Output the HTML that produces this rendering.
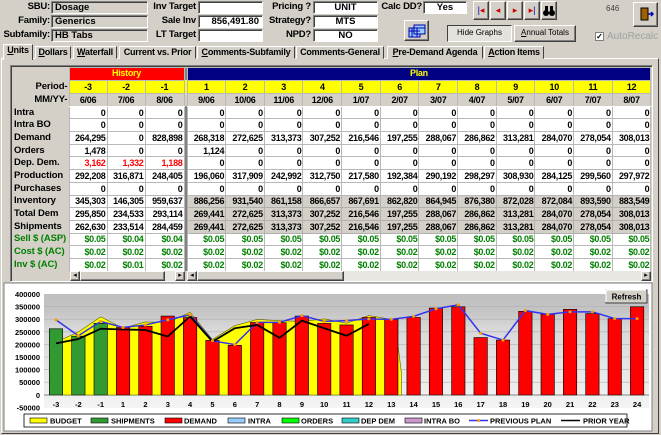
<!DOCTYPE html>
<html><head><meta charset="utf-8"><style>
*{box-sizing:border-box;margin:0;padding:0}
body{width:661px;height:435px;background:#d4d0c8;font-family:"Liberation Sans",sans-serif;font-size:10px;font-weight:bold;position:relative;overflow:hidden;color:#000}
.a{position:absolute}
.lbl{position:absolute;text-align:right;font-size:9.5px;line-height:12px;white-space:nowrap;letter-spacing:-0.2px}
.fld{position:absolute;height:13px;background:#fff;border-top:1px solid #808080;border-left:1px solid #808080;border-bottom:1px solid #fff;border-right:1px solid #fff;box-shadow:inset 1px 1px 0 #404040;font-size:9.5px;line-height:11px;padding:0 3px;white-space:nowrap;overflow:hidden}
.g{background:#d4d0c8}
.btn{position:absolute;background:#d4d0c8;border:1px solid;border-color:#fff #404040 #404040 #fff;box-shadow:inset -1px -1px 0 #808080;text-align:center;font-weight:normal;font-size:8px;white-space:nowrap;overflow:hidden}
.tab{position:absolute;top:46px;height:13px;border:1px solid;border-color:#fff #404040 transparent #fff;font-size:9px;line-height:11px;padding:0 2px;background:#d4d0c8;white-space:nowrap;overflow:hidden;letter-spacing:-0.2px;text-align:center}
table{position:absolute;left:12px;top:67px;width:639px;border-collapse:collapse;table-layout:fixed}
td{border:1px solid #b8b8b8;height:12.7px;font-size:9px;line-height:10px;padding:0 1px;text-align:right;white-space:nowrap;overflow:hidden;background:#fff;letter-spacing:-0.3px}
td.l{text-align:left;background:#d4d0c8;border:none;padding-left:2px;font-size:9.5px;letter-spacing:-0.1px}
td.s{background:#808080;border:none;border-left:1px solid #fff;padding:0}
td.h{background:#d4d0c8;border:none}
tr.y td{background:#ffff00;text-align:center;height:13px}
tr.m td{background:#d4d0c8;text-align:center;height:13px;border-color:#fff #b8b8b8}
tr.gr td.p{background:#d4d0c8;border-color:#b0b0b0}
tr.gn td{color:#008000}
tr.gn td.l{color:#008000}
.r{color:#f00}
</style></head><body>
<div class="lbl" style="left:0;width:50px;top:1px">SBU:</div>
<div class="fld g" style="left:51px;top:1px;width:97px">Dosage</div>
<div class="lbl" style="left:0;width:50px;top:15px">Family:</div>
<div class="fld g" style="left:51px;top:15px;width:97px">Generics</div>
<div class="lbl" style="left:0;width:50px;top:29px">Subfamily:</div>
<div class="fld g" style="left:51px;top:29px;width:97px">HB Tabs</div>
<div class="lbl" style="left:148px;width:48px;top:1px">Inv Target</div>
<div class="fld" style="left:198px;top:1px;width:65px"></div>
<div class="lbl" style="left:148px;width:48px;top:15px">Sale Inv</div>
<div class="fld" style="left:198px;top:15px;width:65px;text-align:right">856,491.80</div>
<div class="lbl" style="left:148px;width:48px;top:29px">LT Target</div>
<div class="fld" style="left:198px;top:29px;width:65px"></div>
<div class="lbl" style="left:263px;width:48px;top:1px">Pricing ?</div>
<div class="fld" style="left:313px;top:1px;width:65px;text-align:center">UNIT</div>
<div class="lbl" style="left:263px;width:48px;top:15px">Strategy?</div>
<div class="fld" style="left:313px;top:15px;width:65px;text-align:center">MTS</div>
<div class="lbl" style="left:263px;width:48px;top:29px">NPD?</div>
<div class="fld" style="left:313px;top:29px;width:65px;text-align:center">NO</div>
<div class="lbl" style="left:378px;width:44px;top:1px">Calc DD?</div>
<div class="fld" style="left:423px;top:1px;width:44px;text-align:center">Yes</div>
<div class="btn" style="left:473px;top:1px;width:16px;height:19px;font-size:9px;line-height:16px;color:#c00"><span style="color:#00a">|</span>◂</div>
<div class="btn" style="left:490px;top:1px;width:16px;height:19px;font-size:9px;line-height:16px;color:#c00">◂</div>
<div class="btn" style="left:507px;top:1px;width:16px;height:19px;font-size:9px;line-height:16px;color:#c00">▸</div>
<div class="btn" style="left:524px;top:1px;width:16px;height:19px;font-size:9px;line-height:16px;color:#c00">▸<span style="color:#00a">|</span></div>
<div class="btn" style="left:541px;top:1px;width:16px;height:19px"><svg width="14" height="17"><circle cx="4" cy="11" r="3" fill="#000"/><circle cx="10" cy="11" r="3" fill="#000"/><rect x="3" y="4" width="3" height="6" fill="#000"/><rect x="8" y="4" width="3" height="6" fill="#000"/></svg></div>
<div class="a" style="left:606px;top:4px;font-size:8px;font-weight:normal;color:#404040">646</div>
<div class="btn" style="left:633px;top:2px;width:25px;height:25px"><svg width="23" height="23"><rect x="7" y="5" width="7" height="12" fill="#a06000" stroke="#000"/><path d="M14 11h5M17 9l2 2-2 2" stroke="#00a" fill="none" stroke-width="1.5"/></svg></div>
<div class="btn" style="left:404px;top:20px;width:25px;height:21px"><svg width="23" height="19"><rect x="4" y="7" width="11" height="9" fill="#9cf" stroke="#00a"/><rect x="9" y="4" width="11" height="9" fill="#9cf" stroke="#00a"/><path d="M9 7h11M4 10h11M7 7v9M12 7v9" stroke="#00a"/></svg></div>
<div class="btn" style="left:447px;top:25px;width:65px;height:17px;line-height:14px;background:#e4e2dc;border-color:#404040 #fff #fff #404040;box-shadow:none">Hide Graphs</div>
<div class="btn" style="left:514px;top:25px;width:62px;height:17px;line-height:14px"><u>A</u>nnual Totals</div>
<div class="a" style="left:595px;top:32px;width:9px;height:9px;border:1px solid #808080;background:#fff;font-size:8px;line-height:7px;text-align:center">✓</div>
<div class="a" style="left:607px;top:31px;font-size:10px;font-weight:normal;color:#a0a0a0">AutoRecalc</div>
<div class="a" style="left:1px;top:58px;width:658px;height:376px;border:1px solid;border-color:#fff #404040 #404040 #fff"></div>
<div class="tab" style="left:3px;top:44px;height:16px;width:30px;border-bottom:none;z-index:2"><u>U</u>nits</div>
<div class="tab" style="left:35px;width:36px"><u>D</u>ollars</div>
<div class="tab" style="left:73px;width:44px"><u>W</u>aterfall</div>
<div class="tab" style="left:119px;width:77px">Current vs. Prior</div>
<div class="tab" style="left:197px;width:98px"><u>C</u>omments-Subfamily</div>
<div class="tab" style="left:296px;width:88px">Comments-General</div>
<div class="tab" style="left:387px;width:96px"><u>P</u>re-Demand Agenda</div>
<div class="tab" style="left:484px;width:60px"><u>A</u>ction Items</div>
<div class="a" style="left:10px;top:65px;width:643px;height:217px;border:1px solid;border-color:#808080 #fff #fff #808080;box-shadow:inset 1px 1px 0 #404040"></div>
<table>
<colgroup><col style="width:57px"><col style="width:38px"><col style="width:38px"><col style="width:39px"><col style="width:3px"><col span="12" style="width:38.67px"></colgroup>
<tr><td class="h" style="height:11px"></td><td colspan="3" style="background:#f00;color:#ff0;text-align:center;height:11px;font-size:9px;line-height:9px">History</td><td class="s"></td><td colspan="12" style="background:#000080;color:#ff0;text-align:center;height:11px;font-size:9px;line-height:9px">Plan</td></tr>
<tr class="y"><td class="l" style="background:#d4d0c8;text-align:right">Period-</td><td>-3</td><td>-2</td><td>-1</td><td class="s"></td><td>1</td><td>2</td><td>3</td><td>4</td><td>5</td><td>6</td><td>7</td><td>8</td><td>9</td><td>10</td><td>11</td><td>12</td></tr>
<tr class="m"><td class="l" style="text-align:right">MM/YY-</td><td>6/06</td><td>7/06</td><td>8/06</td><td class="s"></td><td>9/06</td><td>10/06</td><td>11/06</td><td>12/06</td><td>1/07</td><td>2/07</td><td>3/07</td><td>4/07</td><td>5/07</td><td>6/07</td><td>7/07</td><td>8/07</td></tr>
<tr><td class="l">Intra</td><td>0</td><td>0</td><td>0</td><td class="s"></td><td>0</td><td>0</td><td>0</td><td>0</td><td>0</td><td>0</td><td>0</td><td>0</td><td>0</td><td>0</td><td>0</td><td>0</td></tr>
<tr><td class="l">Intra BO</td><td>0</td><td>0</td><td>0</td><td class="s"></td><td>0</td><td>0</td><td>0</td><td>0</td><td>0</td><td>0</td><td>0</td><td>0</td><td>0</td><td>0</td><td>0</td><td>0</td></tr>
<tr><td class="l">Demand</td><td>264,295</td><td>0</td><td>828,898</td><td class="s"></td><td>268,318</td><td>272,625</td><td>313,373</td><td>307,252</td><td>216,546</td><td>197,255</td><td>288,067</td><td>286,862</td><td>313,281</td><td>284,070</td><td>278,054</td><td>308,013</td></tr>
<tr><td class="l">Orders</td><td>1,478</td><td>0</td><td>0</td><td class="s"></td><td>1,124</td><td>0</td><td>0</td><td>0</td><td>0</td><td>0</td><td>0</td><td>0</td><td>0</td><td>0</td><td>0</td><td>0</td></tr>
<tr><td class="l">Dep. Dem.</td><td class="r">3,162</td><td class="r">1,332</td><td class="r">1,188</td><td class="s"></td><td>0</td><td>0</td><td>0</td><td>0</td><td>0</td><td>0</td><td>0</td><td>0</td><td>0</td><td>0</td><td>0</td><td>0</td></tr>
<tr><td class="l">Production</td><td>292,208</td><td>316,871</td><td>248,405</td><td class="s"></td><td>196,060</td><td>317,909</td><td>242,992</td><td>312,750</td><td>217,580</td><td>192,384</td><td>290,192</td><td>298,297</td><td>308,930</td><td>284,125</td><td>299,560</td><td>297,972</td></tr>
<tr><td class="l">Purchases</td><td>0</td><td>0</td><td>0</td><td class="s"></td><td>0</td><td>0</td><td>0</td><td>0</td><td>0</td><td>0</td><td>0</td><td>0</td><td>0</td><td>0</td><td>0</td><td>0</td></tr>
<tr class="gr"><td class="l">Inventory</td><td>345,303</td><td>146,305</td><td>959,637</td><td class="s"></td><td class="p">886,256</td><td class="p">931,540</td><td class="p">861,158</td><td class="p">866,657</td><td class="p">867,691</td><td class="p">862,820</td><td class="p">864,945</td><td class="p">876,380</td><td class="p">872,028</td><td class="p">872,084</td><td class="p">893,590</td><td class="p">883,549</td></tr>
<tr class="gr"><td class="l">Total Dem</td><td>295,850</td><td>234,533</td><td>293,114</td><td class="s"></td><td class="p">269,441</td><td class="p">272,625</td><td class="p">313,373</td><td class="p">307,252</td><td class="p">216,546</td><td class="p">197,255</td><td class="p">288,067</td><td class="p">286,862</td><td class="p">313,281</td><td class="p">284,070</td><td class="p">278,054</td><td class="p">308,013</td></tr>
<tr class="gr"><td class="l">Shipments</td><td>262,630</td><td>233,514</td><td>284,459</td><td class="s"></td><td class="p">269,441</td><td class="p">272,625</td><td class="p">313,373</td><td class="p">307,252</td><td class="p">216,546</td><td class="p">197,255</td><td class="p">288,067</td><td class="p">286,862</td><td class="p">313,281</td><td class="p">284,070</td><td class="p">278,054</td><td class="p">308,013</td></tr>
<tr class="gn"><td class="l">Sell $ (ASP)</td><td>$0.05</td><td>$0.04</td><td>$0.04</td><td class="s"></td><td>$0.05</td><td>$0.05</td><td>$0.05</td><td>$0.05</td><td>$0.05</td><td>$0.05</td><td>$0.05</td><td>$0.05</td><td>$0.05</td><td>$0.05</td><td>$0.05</td><td>$0.05</td></tr>
<tr class="gn"><td class="l">Cost $ (AC)</td><td>$0.02</td><td>$0.02</td><td>$0.02</td><td class="s"></td><td>$0.02</td><td>$0.02</td><td>$0.02</td><td>$0.02</td><td>$0.02</td><td>$0.02</td><td>$0.02</td><td>$0.02</td><td>$0.02</td><td>$0.02</td><td>$0.02</td><td>$0.02</td></tr>
<tr class="gn"><td class="l">Inv $ (AC)</td><td>$0.02</td><td>$0.01</td><td>$0.02</td><td class="s"></td><td>$0.02</td><td>$0.02</td><td>$0.02</td><td>$0.02</td><td>$0.02</td><td>$0.02</td><td>$0.02</td><td>$0.02</td><td>$0.02</td><td>$0.02</td><td>$0.02</td><td>$0.02</td></tr>
</table>
<div class="a" style="left:70px;top:271px;width:115px;height:10px;background:#e8e6e0"></div>
<div class="btn" style="left:70px;top:271px;width:10px;height:10px;font-size:7px;line-height:8px">◂</div>
<div class="btn" style="left:80px;top:271px;width:85px;height:10px"></div>
<div class="btn" style="left:175px;top:271px;width:10px;height:10px;font-size:7px;line-height:8px">▸</div>
<div class="a" style="left:187px;top:271px;width:464px;height:10px;background:#e8e6e0"></div>
<div class="btn" style="left:187px;top:271px;width:10px;height:10px;font-size:7px;line-height:8px">◂</div>
<div class="btn" style="left:197px;top:271px;width:147px;height:10px"></div>
<div class="btn" style="left:641px;top:271px;width:10px;height:10px;font-size:7px;line-height:8px">▸</div>
<svg class="a" style="left:0;top:0" width="661" height="435" font-family="Liberation Sans, sans-serif" font-weight="bold">
<defs><linearGradient id="bg" x1="0" y1="0" x2="0" y2="1"><stop offset="0" stop-color="#c0c0c0"/><stop offset="0.15" stop-color="#c4c4c4"/><stop offset="0.3" stop-color="#d8d8d8"/><stop offset="1" stop-color="#f4f4f4"/></linearGradient></defs>
<rect x="4" y="283" width="648" height="148" fill="#fff" stroke="#808080"/>
<rect x="44" y="294" width="605" height="114" fill="url(#bg)"/>
<g stroke="#b0b0b0" stroke-width="0.6">
<line x1="44" y1="306.6" x2="649" y2="306.6"/><line x1="44" y1="319.2" x2="649" y2="319.2"/><line x1="44" y1="331.8" x2="649" y2="331.8"/><line x1="44" y1="344.4" x2="649" y2="344.4"/><line x1="44" y1="357" x2="649" y2="357"/><line x1="44" y1="369.6" x2="649" y2="369.6"/><line x1="44" y1="382.2" x2="649" y2="382.2"/></g>
<line x1="44" y1="395" x2="649" y2="395" stroke="#606060" stroke-width="0.8"/>
<g font-size="7.5" text-anchor="end" fill="#000">
<text x="40" y="297">400000</text><text x="40" y="309.6">350000</text><text x="40" y="322.2">300000</text><text x="40" y="334.8">250000</text><text x="40" y="347.4">200000</text><text x="40" y="360">150000</text><text x="40" y="372.6">100000</text><text x="40" y="385.2">50000</text><text x="40" y="397.8">0</text><text x="40" y="410.4">-50000</text></g>
<g font-size="7.5" text-anchor="middle" fill="#000">
<text x="56" y="407">-3</text><text x="78.4" y="407">-2</text><text x="100.7" y="407">-1</text><text x="123" y="407">1</text><text x="145.4" y="407">2</text><text x="167.8" y="407">3</text><text x="190.1" y="407">4</text><text x="212.5" y="407">5</text><text x="234.8" y="407">6</text><text x="257.2" y="407">7</text><text x="279.5" y="407">8</text><text x="301.9" y="407">9</text><text x="324.2" y="407">10</text><text x="346.6" y="407">11</text><text x="368.9" y="407">12</text><text x="391.3" y="407">13</text><text x="413.6" y="407">14</text><text x="436" y="407">15</text><text x="458.3" y="407">16</text><text x="480.7" y="407">17</text><text x="503" y="407">18</text><text x="525.4" y="407">19</text><text x="547.7" y="407">20</text><text x="570.1" y="407">21</text><text x="592.4" y="407">22</text><text x="614.8" y="407">23</text><text x="637.1" y="407">24</text></g>
<g transform="translate(56,395) scale(22.35,-0.000252)">
<polygon fill="#ffff00" stroke="#606000" stroke-width="0.6" vector-effect="non-scaling-stroke" points="0.3,0 0.3,222000 1,250000 2,310000 3,265000 4,290000 5,288000 6,328000 7,220000 8,275000 9,300000 10,295000 11,292000 12,302000 13,285000 14,315000 15,300000 15.3,300000 15.3,200000 15.45,90000 15.45,0"/>
<g fill="#339933" stroke="#000" stroke-width="0.6">
<rect x="-0.3" y="0" width="0.6" height="262630" vector-effect="non-scaling-stroke"/><rect x="0.7" y="0" width="0.6" height="233514" vector-effect="non-scaling-stroke"/><rect x="1.7" y="0" width="0.6" height="284459" vector-effect="non-scaling-stroke"/></g>
<g fill="#ff0000" stroke="#000" stroke-width="0.6">
<rect vector-effect="non-scaling-stroke" x="2.7" y="0" width="0.6" height="268318"/>
<rect vector-effect="non-scaling-stroke" x="3.7" y="0" width="0.6" height="272625"/>
<rect vector-effect="non-scaling-stroke" x="4.7" y="0" width="0.6" height="313373"/>
<rect vector-effect="non-scaling-stroke" x="5.7" y="0" width="0.6" height="307252"/>
<rect vector-effect="non-scaling-stroke" x="6.7" y="0" width="0.6" height="216546"/>
<rect vector-effect="non-scaling-stroke" x="7.7" y="0" width="0.6" height="197255"/>
<rect vector-effect="non-scaling-stroke" x="8.7" y="0" width="0.6" height="288067"/>
<rect vector-effect="non-scaling-stroke" x="9.7" y="0" width="0.6" height="286862"/>
<rect vector-effect="non-scaling-stroke" x="10.7" y="0" width="0.6" height="313281"/>
<rect vector-effect="non-scaling-stroke" x="11.7" y="0" width="0.6" height="284070"/>
<rect vector-effect="non-scaling-stroke" x="12.7" y="0" width="0.6" height="278054"/>
<rect vector-effect="non-scaling-stroke" x="13.7" y="0" width="0.6" height="308013"/>
<rect vector-effect="non-scaling-stroke" x="14.7" y="0" width="0.6" height="300000"/>
<rect vector-effect="non-scaling-stroke" x="15.7" y="0" width="0.6" height="308000"/>
<rect vector-effect="non-scaling-stroke" x="16.7" y="0" width="0.6" height="345000"/>
<rect vector-effect="non-scaling-stroke" x="17.7" y="0" width="0.6" height="350000"/>
<rect vector-effect="non-scaling-stroke" x="18.7" y="0" width="0.6" height="228000"/>
<rect vector-effect="non-scaling-stroke" x="19.7" y="0" width="0.6" height="218000"/>
<rect vector-effect="non-scaling-stroke" x="20.7" y="0" width="0.6" height="332000"/>
<rect vector-effect="non-scaling-stroke" x="21.7" y="0" width="0.6" height="320000"/>
<rect vector-effect="non-scaling-stroke" x="22.7" y="0" width="0.6" height="340000"/>
<rect vector-effect="non-scaling-stroke" x="23.7" y="0" width="0.6" height="323000"/>
<rect vector-effect="non-scaling-stroke" x="24.7" y="0" width="0.6" height="303000"/>
<rect vector-effect="non-scaling-stroke" x="25.7" y="0" width="0.6" height="350000"/></g>
<polyline fill="none" stroke="#3333ee" stroke-width="1.5" vector-effect="non-scaling-stroke" points="0,298000 1,235000 2,292000 3,268000 4,278000 5,298000 6,318000 7,215000 8,200000 9,288000 10,288000 11,315000 12,292000 13,295000 14,302000 15,300000 16,312000 17,342000 18,358000 19,245000 20,218000 21,335000 22,320000 23,330000 24,330000 25,303000 26,303000"/>
<polyline fill="none" stroke="#000" stroke-width="1.8" vector-effect="non-scaling-stroke" points="0,205000 1,222000 2,263000 3,260000 4,258000 5,232000 6,312000 7,212000 8,265000 9,278000 10,227000 11,295000 12,265000 13,235000 14,282000"/>
<g fill="#ff9900">
<ellipse cx="0" cy="298000" rx="0.07" ry="6000"/><ellipse cx="1" cy="235000" rx="0.07" ry="6000"/><ellipse cx="2" cy="292000" rx="0.07" ry="6000"/><ellipse cx="3" cy="268000" rx="0.07" ry="6000"/><ellipse cx="4" cy="278000" rx="0.07" ry="6000"/><ellipse cx="5" cy="298000" rx="0.07" ry="6000"/><ellipse cx="6" cy="318000" rx="0.07" ry="6000"/><ellipse cx="7" cy="215000" rx="0.07" ry="6000"/><ellipse cx="8" cy="200000" rx="0.07" ry="6000"/><ellipse cx="9" cy="288000" rx="0.07" ry="6000"/><ellipse cx="10" cy="288000" rx="0.07" ry="6000"/><ellipse cx="11" cy="315000" rx="0.07" ry="6000"/><ellipse cx="12" cy="292000" rx="0.07" ry="6000"/><ellipse cx="13" cy="295000" rx="0.07" ry="6000"/><ellipse cx="14" cy="302000" rx="0.07" ry="6000"/><ellipse cx="15" cy="300000" rx="0.07" ry="6000"/><ellipse cx="16" cy="312000" rx="0.07" ry="6000"/><ellipse cx="17" cy="342000" rx="0.07" ry="6000"/><ellipse cx="18" cy="358000" rx="0.07" ry="6000"/><ellipse cx="19" cy="245000" rx="0.07" ry="6000"/><ellipse cx="20" cy="218000" rx="0.07" ry="6000"/><ellipse cx="21" cy="335000" rx="0.07" ry="6000"/><ellipse cx="22" cy="320000" rx="0.07" ry="6000"/><ellipse cx="23" cy="330000" rx="0.07" ry="6000"/><ellipse cx="24" cy="330000" rx="0.07" ry="6000"/><ellipse cx="25" cy="303000" rx="0.07" ry="6000"/><ellipse cx="26" cy="303000" rx="0.07" ry="6000"/></g>
</g>
<rect x="606" y="290" width="41" height="13" fill="#d4d0c8" stroke="#404040"/>
<line x1="606" y1="290" x2="646" y2="290" stroke="#fff"/><line x1="606" y1="290" x2="606" y2="302" stroke="#fff"/>
<text x="626.5" y="299.5" font-size="8" text-anchor="middle">Refresh</text>
<rect x="24" y="414" width="603" height="13" fill="#fff" stroke="#000" stroke-width="0.8"/>
<g font-size="7.5" fill="#000">
<rect x="30" y="418" width="17" height="5" fill="#ffff00" stroke="#000" stroke-width="0.6"/><text x="50" y="423.5">BUDGET</text>
<rect x="91" y="418" width="17" height="5" fill="#339933" stroke="#000" stroke-width="0.6"/><text x="111" y="423.5">SHIPMENTS</text>
<rect x="165" y="418" width="17" height="5" fill="#ff0000" stroke="#000" stroke-width="0.6"/><text x="184" y="423.5">DEMAND</text>
<rect x="228" y="418" width="17" height="5" fill="#99ccff" stroke="#000" stroke-width="0.6"/><text x="248" y="423.5">INTRA</text>
<rect x="282" y="418" width="17" height="5" fill="#00ff00" stroke="#000" stroke-width="0.6"/><text x="301" y="423.5">ORDERS</text>
<rect x="342" y="418" width="17" height="5" fill="#33cccc" stroke="#000" stroke-width="0.6"/><text x="361" y="423.5">DEP DEM</text>
<rect x="405" y="418" width="17" height="5" fill="#cc99cc" stroke="#000" stroke-width="0.6"/><text x="424" y="423.5">INTRA BO</text>
<line x1="469" y1="420.5" x2="488" y2="420.5" stroke="#3333ee" stroke-width="1.5"/><circle cx="478.5" cy="420.5" r="1.5" fill="#ff9900"/><text x="490" y="423.5">PREVIOUS PLAN</text>
<line x1="561" y1="420.5" x2="580" y2="420.5" stroke="#000" stroke-width="1.5"/><text x="583" y="423.5">PRIOR YEAR</text>
</g>
</svg>
</body></html>
